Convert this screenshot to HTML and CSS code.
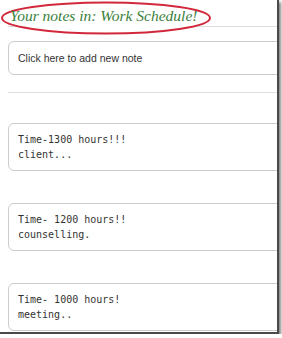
FILE: index.html
```html
<!DOCTYPE html>
<html lang="en">

<head>
    <meta charset="UTF-8">
    <meta name="viewport" content="width=device-width, initial-scale=1.0">
    <title>Notes</title>
    <link rel="stylesheet" href="styles.css">
</head>

<body>
    <div class="frame">
        <div class="header">
            <h1 class="title">Your notes in: Work Schedule!</h1>
        </div>
        <!-- red mark drawn over the title -->
        <svg class="mark" width="212" height="36" viewBox="0 0 212 36">
            <ellipse cx="106" cy="18" rx="104" ry="15.5" fill="#fff" stroke="#d2283c" stroke-width="2" />
        </svg>

        <div class="add-note">Click here to add new note</div>
        <hr class="divider">

        <ul class="notes">
            <li class="note">Time-1300 hours!!!<br>client...</li>
            <li class="note">Time- 1200 hours!!<br>counselling.</li>
            <li class="note">Time- 1000 hours!<br>meeting..</li>
        </ul>
    </div>
</body>

</html>
```

FILE: styles.css
```css
html,
body {
    margin: 0;
    padding: 0;
    background-color: #fff;
}

.frame {
    position: relative;
    width: 277px;
    height: 332px;
    overflow: hidden;
    border-right: 2px solid #4a4a4a;
    border-bottom: 2px solid #4a4a4a;
    box-shadow: 2px 2px 3px rgba(0, 0, 0, 0.5);
}

.header {
    height: 26px;
    margin-left: 8px;
    border-bottom: 1px solid #ddd;
}

.title {
    position: relative;
    z-index: 1;
    margin: 0;
    padding: 5px 0 0 2px;
    font-family: "Liberation Serif", serif;
    font-style: italic;
    font-weight: normal;
    font-size: 15.5px;
    line-height: 21px;
    color: #3a803a;
}

.mark {
    position: absolute;
    left: 0;
    top: 0;
}

.add-note {
    width: 290px;
    margin: 14px 0 0 8px;
    padding: 0 9px;
    border: 1px solid #ccc;
    border-radius: 6px;
    font-family: "Liberation Sans", Arial, sans-serif;
    font-size: 10.5px;
    line-height: 32px;
    color: #333;
}

.divider {
    height: 0;
    margin: 17px 0 0 8px;
    border: 0;
    border-top: 1px solid #ddd;
}

.notes {
    margin: 0;
    padding: 0 0 0 8px;
    list-style: none;
}

.note {
    width: 290px;
    margin-top: 32px;
    padding: 8px 9px;
    border: 1px solid #ccc;
    border-radius: 6px;
    font-family: "DejaVu Sans Mono", monospace;
    font-size: 10px;
    line-height: 15px;
    color: #333;
}

.note:first-child {
    margin-top: 30px;
}
```
